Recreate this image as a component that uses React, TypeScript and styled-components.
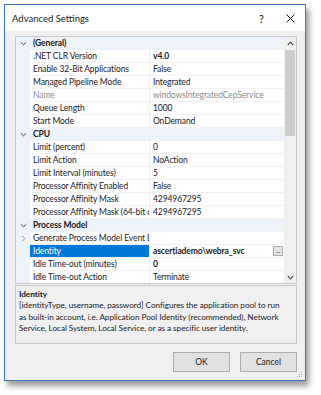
import React from 'react';
import styled, { createGlobalStyle } from 'styled-components';

const GlobalStyle = createGlobalStyle`
  html, body {
    margin: 0;
    padding: 0;
    background: #ffffff;
  }
  body {
    font-family: 'Lato', 'Open Sans', sans-serif;
    -webkit-font-smoothing: antialiased;
  }
`;

type Prop = {
  kind: 'cat' | 'prop';
  name: string;
  value?: string;
  bold?: boolean;
  disabled?: boolean;
  selected?: boolean;
  expander?: boolean;
  ellipsis?: boolean;
};

const rows: Prop[] = [
  { kind: 'cat', name: '(General)' },
  { kind: 'prop', name: '.NET CLR Version', value: 'v4.0', bold: true },
  { kind: 'prop', name: 'Enable 32-Bit Applications', value: 'False' },
  { kind: 'prop', name: 'Managed Pipeline Mode', value: 'Integrated' },
  { kind: 'prop', name: 'Name', value: 'windowsIntegratedCepService', disabled: true },
  { kind: 'prop', name: 'Queue Length', value: '1000' },
  { kind: 'prop', name: 'Start Mode', value: 'OnDemand' },
  { kind: 'cat', name: 'CPU' },
  { kind: 'prop', name: 'Limit (percent)', value: '0' },
  { kind: 'prop', name: 'Limit Action', value: 'NoAction' },
  { kind: 'prop', name: 'Limit Interval (minutes)', value: '5' },
  { kind: 'prop', name: 'Processor Affinity Enabled', value: 'False' },
  { kind: 'prop', name: 'Processor Affinity Mask', value: '4294967295' },
  { kind: 'prop', name: 'Processor Affinity Mask (64-bit option)', value: '4294967295' },
  { kind: 'cat', name: 'Process Model' },
  { kind: 'prop', name: 'Generate Process Model Event Log Entry', value: '', expander: true },
  { kind: 'prop', name: 'Identity', value: 'ascertiademo\\webra_svc', bold: true, selected: true, ellipsis: true },
  { kind: 'prop', name: 'Idle Time-out (minutes)', value: '0', bold: true },
  { kind: 'prop', name: 'Idle Time-out Action', value: 'Terminate' },
];

const Chevron = ({ open }: { open: boolean }) => (
  <svg width="7" height="7" viewBox="0 0 7 7">
    {open ? (
      <path d="M0.8 2.2 L3.5 4.8 L6.2 2.2" fill="none" stroke="#444" strokeWidth="1" />
    ) : (
      <path d="M2.3 0.8 L4.9 3.5 L2.3 6.2" fill="none" stroke="#999" strokeWidth="1" />
    )}
  </svg>
);

const ArrowIcon = ({ up }: { up: boolean }) => (
  <svg width="7" height="5" viewBox="0 0 7 5">
    <path
      d={up ? 'M0.8 4 L3.5 1.2 L6.2 4' : 'M0.8 1 L3.5 3.8 L6.2 1'}
      fill="none"
      stroke="#555"
      strokeWidth="1.2"
    />
  </svg>
);

export default function App() {
  return (
    <>
      <GlobalStyle />
      <Page>
        <Window>
          <TitleBar>
            <Title>Advanced Settings</Title>
            <TitleButtons>
              <TitleGlyph>?</TitleGlyph>
              <TitleGlyph>
                <svg width="9" height="9" viewBox="0 0 9 9">
                  <path d="M0.5 0.5 L8.5 8.5 M8.5 0.5 L0.5 8.5" stroke="#222" strokeWidth="1" />
                </svg>
              </TitleGlyph>
            </TitleButtons>
          </TitleBar>
          <Body>
            <Grid>
              <GridRows>
                {rows.map((r, i) =>
                  r.kind === 'cat' ? (
                    <CatRow key={i}>
                      <Gutter>
                        <Chevron open />
                      </Gutter>
                      <CatName>{r.name}</CatName>
                    </CatRow>
                  ) : (
                    <PropRow key={i}>
                      <Gutter>{r.expander && <Chevron open={false} />}</Gutter>
                      <NameCell $selected={r.selected} $disabled={r.disabled}>
                        {r.name}
                      </NameCell>
                      <ValueCell $bold={r.bold} $disabled={r.disabled}>
                        <ValueText>{r.value}</ValueText>
                        {r.ellipsis && <DotsButton>...</DotsButton>}
                      </ValueCell>
                    </PropRow>
                  )
                )}
              </GridRows>
              <ScrollBar>
                <ScrollArrow>
                  <ArrowIcon up />
                </ScrollArrow>
                <ScrollTrack>
                  <Thumb />
                </ScrollTrack>
                <ScrollArrow>
                  <ArrowIcon up={false} />
                </ScrollArrow>
              </ScrollBar>
            </Grid>
            <Description>
              <DescTitle>Identity</DescTitle>
              <DescText>
                [identityType, username, password] Configures the application pool to run as
                built-in account, i.e. Application Pool Identity (recommended), Network Service,
                Local System, Local Service, or as a specific user identity.
              </DescText>
            </Description>
            <Buttons>
              <Button>OK</Button>
              <Button>Cancel</Button>
            </Buttons>
            <Grip>
              <svg width="6" height="6" viewBox="0 0 6 6">
                <rect x="4" y="0" width="1" height="1" fill="#aaa" />
                <rect x="2" y="2" width="1" height="1" fill="#aaa" />
                <rect x="4" y="2" width="1" height="1" fill="#aaa" />
                <rect x="0" y="4" width="1" height="1" fill="#aaa" />
                <rect x="2" y="4" width="1" height="1" fill="#aaa" />
                <rect x="4" y="4" width="1" height="1" fill="#aaa" />
              </svg>
            </Grip>
          </Body>
        </Window>
      </Page>
    </>
  );
}

const Page = styled.div`
  padding: 4px 0 0 4px;
  width: 321px;
  height: 395px;
  box-sizing: border-box;
`;

const Window = styled.div`
  width: 302px;
  height: 377px;
  box-sizing: border-box;
  border: 1px solid #3f77c0;
  background: #f0f0f0;
  box-shadow: 3px 5px 6px rgba(0, 0, 0, 0.4);
  display: flex;
  flex-direction: column;
`;

const TitleBar = styled.div`
  height: 26px;
  background: #ffffff;
  display: flex;
  align-items: center;
  justify-content: space-between;
  padding: 0 10px 0 7px;
`;

const Title = styled.div`
  font-size: 9.5px;
  color: #1a1a1a;
`;

const TitleButtons = styled.div`
  display: flex;
  gap: 22px;
  align-items: center;
`;

const TitleGlyph = styled.div`
  font-size: 11px;
  color: #222;
  display: flex;
  align-items: center;
`;

const Body = styled.div`
  flex: 1;
  position: relative;
  padding: 5px 8px 0 10px;
  display: flex;
  flex-direction: column;
`;

const Grid = styled.div`
  height: 248px;
  box-sizing: border-box;
  border: 1px solid #c9c9c9;
  background: #ffffff;
  display: flex;
`;

const GridRows = styled.div`
  flex: 1;
  display: flex;
  flex-direction: column;
  overflow: hidden;
`;

const RowBase = styled.div`
  height: 13px;
  display: flex;
  align-items: stretch;
  font-size: 8.5px;
  letter-spacing: -0.1px;
  line-height: 13px;
  color: #1a1a1a;
`;

const CatRow = styled(RowBase)`
  background: #eef2f9;
`;

const PropRow = styled(RowBase)`
  background: #ffffff;
`;

const Gutter = styled.div`
  width: 14px;
  flex: none;
  background: #eef2f9;
  display: flex;
  align-items: center;
  justify-content: center;
`;

const CatName = styled.div`
  font-weight: 700;
  padding-left: 3px;
`;

const NameCell = styled.div<{ $selected?: boolean; $disabled?: boolean }>`
  width: 120px;
  flex: none;
  box-sizing: border-box;
  padding-left: 3px;
  white-space: nowrap;
  overflow: hidden;
  text-overflow: clip;
  border-right: 1px solid #eeeeee;
  border-bottom: 1px solid #f2f2f2;
  background: ${(p) => (p.$selected ? '#0078d7' : '#ffffff')};
  color: ${(p) => (p.$selected ? '#ffffff' : p.$disabled ? '#8c8c8c' : '#1a1a1a')};
`;

const ValueCell = styled.div<{ $bold?: boolean; $disabled?: boolean }>`
  flex: 1;
  min-width: 0;
  display: flex;
  align-items: center;
  justify-content: space-between;
  padding-left: 3px;
  padding-right: 1px;
  border-bottom: 1px solid #f2f2f2;
  font-weight: ${(p) => (p.$bold ? 700 : 400)};
  color: ${(p) => (p.$disabled ? '#8c8c8c' : '#1a1a1a')};
  white-space: nowrap;
  overflow: hidden;
`;

const ValueText = styled.span``;

const DotsButton = styled.div`
  width: 10px;
  height: 10px;
  box-sizing: border-box;
  border: 1px solid #adadad;
  background: #e5e5e5;
  font-size: 7px;
  line-height: 6px;
  text-align: center;
  font-weight: 400;
  color: #333;
`;

const ScrollBar = styled.div`
  width: 12px;
  flex: none;
  background: #f0f0f0;
  display: flex;
  flex-direction: column;
`;

const ScrollArrow = styled.div`
  height: 12px;
  display: flex;
  align-items: center;
  justify-content: center;
`;

const ScrollTrack = styled.div`
  flex: 1;
  padding: 1px 1px;
`;

const Thumb = styled.div`
  height: 86px;
  background: #cdcdcd;
`;

const Description = styled.div`
  margin-top: 1px;
  height: 59px;
  box-sizing: border-box;
  border: 1px solid #c9c9c9;
  padding: 2px 9px 2px 3px;
  font-size: 8.2px;
  letter-spacing: -0.05px;
  color: #1a1a1a;
`;

const DescTitle = styled.div`
  font-weight: 700;
  line-height: 12px;
`;

const DescText = styled.div`
  line-height: 11.5px;
`;

const Buttons = styled.div`
  display: flex;
  justify-content: flex-end;
  gap: 10px;
  margin-top: 8px;
`;

const Button = styled.div`
  width: 57px;
  height: 20px;
  box-sizing: border-box;
  border: 1px solid #adadad;
  background: #e1e1e1;
  font-size: 8.5px;
  color: #1a1a1a;
  display: flex;
  align-items: center;
  justify-content: center;
`;

const Grip = styled.div`
  position: absolute;
  right: 2px;
  bottom: 2px;
  line-height: 0;
`;
